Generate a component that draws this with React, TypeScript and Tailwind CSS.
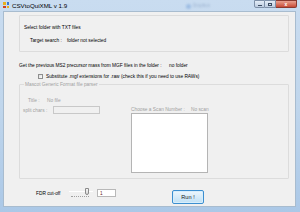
import React from 'react';

const font = { fontFamily: '"Liberation Sans", Arial, sans-serif' };

function TitleBar() {
    return (
        <div className="h-[11px] flex items-start relative">
            {/* app icon */}
            <div className="mt-[2px] ml-[3px] w-[6px] h-[6px] grid grid-cols-2 gap-[1px]">
                <div className="bg-[#e8b020]" />
                <div className="bg-[#3a78d0]" />
                <div className="bg-[#d04020]" />
                <div className="bg-[#e8b020]" />
            </div>
            <span className="ml-[3px] mt-[2px] text-[6.2px] leading-[7px] text-black">CSVtoQuiXML v 1.9</span>
            {/* blurred glass reflection */}
            <div className="absolute left-[186px] top-[3px] flex items-center gap-[2px] opacity-30 blur-[0.8px]">
                <div className="w-[5px] h-[5px] rounded-full bg-[#3c78c8]" />
                <span className="text-[4.5px] text-[#2a4a80]">Dropbox</span>
            </div>
            {/* caption buttons */}
            <div className="ml-auto mr-[3px] flex h-[8px]">
                <div className="w-[11px] h-[8px] border border-[#7e90a8] rounded-bl-[2px] bg-gradient-to-b from-[#e4edf7] to-[#bccce0] flex items-center justify-center">
                    <div className="w-[4px] h-[1px] bg-[#3a4a60] mt-[2px]" />
                </div>
                <div className="w-[11px] h-[8px] border border-l-0 border-[#7e90a8] bg-gradient-to-b from-[#e4edf7] to-[#bccce0] flex items-center justify-center">
                    <div className="w-[4px] h-[3px] border border-[#3a4a60]" />
                </div>
                <div className="w-[21px] h-[8px] border border-l-0 border-[#8a3a30] rounded-br-[2px] bg-gradient-to-b from-[#e8a090] to-[#c74a36] flex items-center justify-center">
                    <span className="text-[5px] leading-[5px] font-bold text-white">x</span>
                </div>
            </div>
        </div>
    );
}

export default function App() {
    return (
        <div
            className="w-[300px] h-[212px] overflow-hidden flex flex-col bg-gradient-to-b from-[#c9dcf0] via-[#c0d6ec] to-[#abc8e7]"
            style={font}
        >
            <TitleBar />
            <div className="flex-1 mx-[3px] mb-[5px] mr-[4px] bg-[#f0f0f0] border border-[#a8bccf] flex flex-col pl-[15px] pr-[6px] text-[4.8px] leading-[5px] text-black">
                {/* folder group */}
                <div className="mt-[3px] h-[37px] border border-[#dcdcdc] rounded-[1px] flex flex-col pl-[4px]">
                    <span className="mt-[9px]">Select folder with TXT files</span>
                    <div className="flex mt-[8px] pl-[6px]">
                        <span className="w-[37px]">Target search :</span>
                        <span>folder not selected</span>
                    </div>
                </div>

                <div className="flex mt-[11px]">
                    <span className="w-[150px]">Get the previous MS2 precursor mass from MGF files in the folder :</span>
                    <span>no folder</span>
                </div>

                <div className="flex items-center mt-[6px] ml-[19px]">
                    <div className="w-[5px] h-[5px] border border-[#8e8f8f] bg-gradient-to-br from-[#dcdcdc] to-white" />
                    <span className="ml-[3px]">Substitute .mgf extensions for .raw (check this if you need to use RAWs)</span>
                </div>

                {/* MGF parser group (disabled) */}
                <fieldset className="mt-[3px] h-[97px] border border-[#dcdcdc] rounded-[1px] px-[3px] text-[#a0a0a0]">
                    <legend className="ml-[1px] px-[1px]">Mascot Generic Format file parser</legend>
                    <div className="flex mt-[11px] pl-[5px]">
                        <span className="w-[19px]">Title :</span>
                        <span>No file</span>
                    </div>
                    <div className="flex mt-[3px]">
                        <div className="w-[108px] flex flex-col">
                            <div className="flex items-center">
                                <span className="w-[30px]">split chars :</span>
                                <div className="w-[47px] h-[8px] border border-[#c8c8c8] bg-[#f0f0f0]" />
                            </div>
                        </div>
                        <div className="flex flex-col">
                            <div className="flex mt-[1px]">
                                <span className="w-[60px]">Choose a Scan Number :</span>
                                <span>No scan</span>
                            </div>
                            <div className="mt-[1px] w-[77px] h-[60px] bg-white border border-[#b4b4b4]" />
                        </div>
                    </div>
                </fieldset>

                {/* bottom row */}
                <div className="flex items-start mt-[8px]">
                    <span className="ml-[17px] w-[33px] mt-[4px]">FDR cut-off</span>
                    <div className="relative w-[24px] h-[12px]">
                        <div className="absolute left-0 right-0 top-[4px] h-[1px] bg-[#b0b0b0] border-b border-white" />
                        <div className="absolute left-[16px] top-[1px] w-[4px] h-[7px] border border-[#8a8a8a] rounded-b-[2px] bg-gradient-to-b from-[#f6f6f6] to-[#d8d8d8]" />
                        <div className="absolute left-[2px] right-[4px] top-[9px] h-[1px] border-t border-dotted border-[#a0a0a0]" />
                    </div>
                    <div className="ml-[4px] mt-[2px] w-[19px] h-[8px] bg-white border border-[#b8b8b8] flex items-center pl-[2px] text-[#6b1f1f]">1</div>
                    <div className="ml-[56px] mt-[3px] w-[32px] h-[14px] rounded-[2px] border border-[#3c8fd0] bg-gradient-to-b from-[#eef7fd] to-[#bfe0f5] flex items-center justify-center text-[5.6px] text-[#1a1a1a] shadow-[inset_0_0_0_1px_#d8eefb]">
                        Run !
                    </div>
                </div>
            </div>
        </div>
    );
}
